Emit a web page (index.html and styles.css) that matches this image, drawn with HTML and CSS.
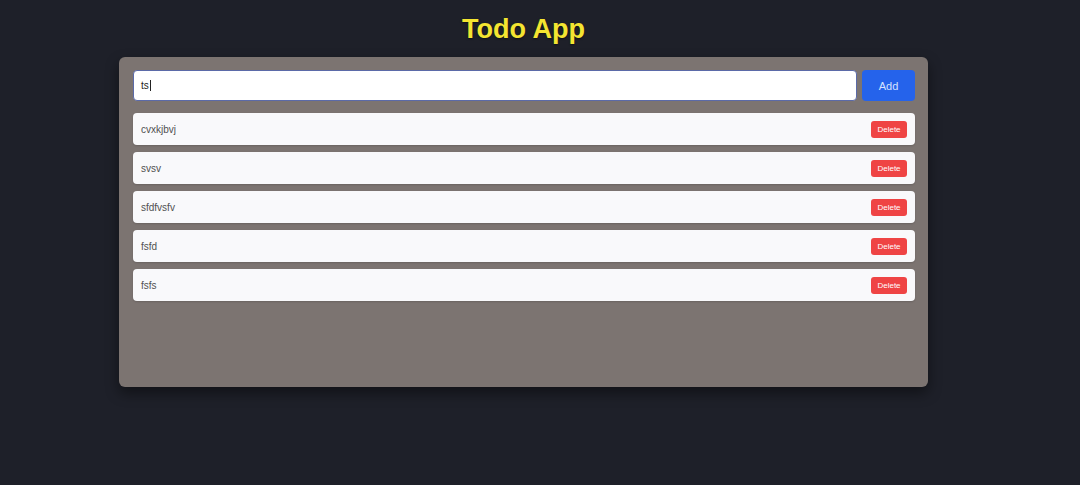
FILE: index.html
```html
<!DOCTYPE html>
<html>
<head>
<meta charset="utf-8">
<link rel="stylesheet" href="styles.css">
</head>
<body>
<div class="app">
  <h1 class="title">Todo App</h1>
  <div class="card">
    <div class="add-row">
      <div class="input">ts<span class="caret"></span></div>
      <button class="add-btn">Add</button>
    </div>
    <ul class="list">
      <li class="item"><span>cvxkjbvj</span><button class="del">Delete</button></li>
      <li class="item"><span>svsv</span><button class="del">Delete</button></li>
      <li class="item"><span>sfdfvsfv</span><button class="del">Delete</button></li>
      <li class="item"><span>fsfd</span><button class="del">Delete</button></li>
      <li class="item"><span>fsfs</span><button class="del">Delete</button></li>
    </ul>
  </div>
</div>
</body>
</html>
```
FILE: styles.css
```css
html, body {
  margin: 0;
  padding: 0;
  background: #1e2029;
  font-family: "Liberation Sans", Arial, sans-serif;
  height: 100%;
}
.app {
  width: 809px;
  margin-left: 119px;
}
.title {
  margin: 0;
  height: 57px;
  line-height: 58px;
  text-align: center;
  font-size: 27px;
  font-weight: bold;
  color: #f4e531;
  text-shadow: 0 1px 2px rgba(0,0,0,0.5);
  font-family: "Liberation Sans", Arial, sans-serif;
}
.card {
  background: #7c7471;
  border-radius: 6px;
  box-sizing: border-box;
  height: 330px;
  padding: 13px 13px 13px 14px;
  box-shadow: 0 6px 14px rgba(0,0,0,0.45);
}
.add-row {
  display: flex;
  gap: 5px;
  height: 31px;
}
.input {
  flex: 1;
  background: #fff;
  border: 1px solid #5b6aa8;
  border-radius: 4px;
  box-sizing: border-box;
  display: flex;
  align-items: center;
  padding-left: 7px;
  font-size: 10px;
  color: #222;
}
.caret {
  display: inline-block;
  width: 1px;
  height: 11px;
  background: #222;
  margin-left: 1px;
}
.add-btn {
  width: 53px;
  background: #2563eb;
  color: #d6e2ff;
  border: none;
  border-radius: 4px;
  font-size: 11px;
  font-family: "Liberation Sans", Arial, sans-serif;
  padding: 0;
}
.list {
  list-style: none;
  margin: 12px 0 0;
  padding: 0;
  display: flex;
  flex-direction: column;
  gap: 7px;
}
.item {
  height: 32px;
  background: #f9f9fb;
  border-radius: 4px;
  display: flex;
  align-items: center;
  justify-content: space-between;
  padding: 0 8px 0 8px;
  box-sizing: border-box;
  font-size: 10px;
  color: #505050;
  box-shadow: 0 1px 2px rgba(0,0,0,0.15);
}
.del {
  width: 36px;
  height: 17px;
  background: #ef4444;
  color: #fff;
  border: none;
  border-radius: 3px;
  font-size: 8px;
  font-family: "Liberation Sans", Arial, sans-serif;
  padding: 0;
}
```
